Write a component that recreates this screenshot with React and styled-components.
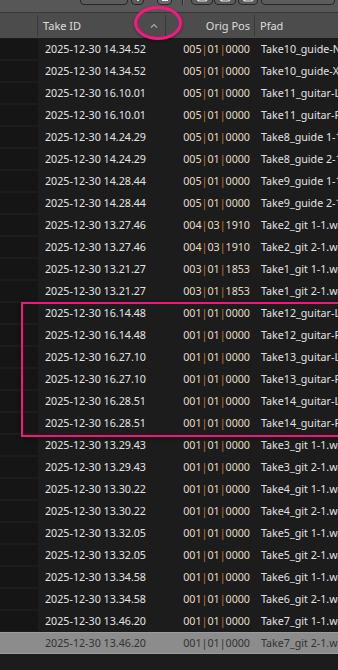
import React from 'react';
import styled, { createGlobalStyle } from 'styled-components';

//////////////////////////////
// Global

const Global = createGlobalStyle`
  html, body {
    margin: 0;
    padding: 0;
    background: #1c1c1c;
  }
  body {
    font-family: "Noto Sans", "Open Sans", sans-serif;
  }
`

//////////////////////////////
// Data

const rows = [
  ['2025-12-30 14.34.52', '005|01|0000', 'Take10_guide-Nylon-1.wav'],
  ['2025-12-30 14.34.52', '005|01|0000', 'Take10_guide-XLR-1.wav'],
  ['2025-12-30 16.10.01', '005|01|0000', 'Take11_guitar-L-1.wav'],
  ['2025-12-30 16.10.01', '005|01|0000', 'Take11_guitar-R-1.wav'],
  ['2025-12-30 14.24.29', '005|01|0000', 'Take8_guide 1-1.wav'],
  ['2025-12-30 14.24.29', '005|01|0000', 'Take8_guide 2-1.wav'],
  ['2025-12-30 14.28.44', '005|01|0000', 'Take9_guide 1-1.wav'],
  ['2025-12-30 14.28.44', '005|01|0000', 'Take9_guide 2-1.wav'],
  ['2025-12-30 13.27.46', '004|03|1910', 'Take2_git 1-1.wav'],
  ['2025-12-30 13.27.46', '004|03|1910', 'Take2_git 2-1.wav'],
  ['2025-12-30 13.21.27', '003|01|1853', 'Take1_git 1-1.wav'],
  ['2025-12-30 13.21.27', '003|01|1853', 'Take1_git 2-1.wav'],
  ['2025-12-30 16.14.48', '001|01|0000', 'Take12_guitar-L-1.wav'],
  ['2025-12-30 16.14.48', '001|01|0000', 'Take12_guitar-R-1.wav'],
  ['2025-12-30 16.27.10', '001|01|0000', 'Take13_guitar-L-1.wav'],
  ['2025-12-30 16.27.10', '001|01|0000', 'Take13_guitar-R-1.wav'],
  ['2025-12-30 16.28.51', '001|01|0000', 'Take14_guitar-L-1.wav'],
  ['2025-12-30 16.28.51', '001|01|0000', 'Take14_guitar-R-1.wav'],
  ['2025-12-30 13.29.43', '001|01|0000', 'Take3_git 1-1.wav'],
  ['2025-12-30 13.29.43', '001|01|0000', 'Take3_git 2-1.wav'],
  ['2025-12-30 13.30.22', '001|01|0000', 'Take4_git 1-1.wav'],
  ['2025-12-30 13.30.22', '001|01|0000', 'Take4_git 2-1.wav'],
  ['2025-12-30 13.32.05', '001|01|0000', 'Take5_git 1-1.wav'],
  ['2025-12-30 13.32.05', '001|01|0000', 'Take5_git 2-1.wav'],
  ['2025-12-30 13.34.58', '001|01|0000', 'Take6_git 1-1.wav'],
  ['2025-12-30 13.34.58', '001|01|0000', 'Take6_git 2-1.wav'],
  ['2025-12-30 13.46.20', '001|01|0000', 'Take7_git 1-1.wav'],
  ['2025-12-30 13.46.20', '001|01|0000', 'Take7_git 2-1.wav'],
]
const SELECTED = rows.length - 1

//////////////////////////////
// Styled components

const Page = styled.div`
  position: relative;
  width: 338px;
  height: 670px;
  overflow: hidden;
  background: #1c1c1c;
  font-size: 10.7px;
`
const Toolbar = styled.div`
  display: flex;
  align-items: flex-end;
  height: 12px;
  padding-bottom: 0;
  overflow: hidden;
  background: #575757;
  border-bottom: 1px solid #383838;
  box-sizing: content-box;
`
const ToolRow = styled.div`
  display: flex;
  align-items: flex-end;
  height: 12px;
  margin-bottom: 7px;
`
const ToolButton = styled.div`
  position: relative;
  flex: none;
  width: ${p => p.w}px;
  height: 22px;
  margin-left: ${p => p.ml}px;
  box-sizing: border-box;
  border: 1px solid #262626;
  border-radius: 4px;
  background: ${p => (p.lit ? '#6a6a6a' : '#5c5c5c')};
  display: flex;
  align-items: flex-end;
  justify-content: center;
  padding-bottom: 1px;
`
const ToolSep = styled.div`
  flex: none;
  width: 1px;
  height: 20px;
  margin-left: ${p => p.ml}px;
  background: #2e2e2e;
  border-right: 1px solid #6a6a6a;
`
const Header = styled.div`
  display: grid;
  grid-template-columns: 38px 128px 89px 1fr;
  height: 25px;
  background: #4c4c4c;
  color: #dcdcdc;
  font-size: 11px;
`
const HeadCell = styled.div`
  display: flex;
  align-items: center;
  justify-content: ${p => (p.right ? 'flex-end' : 'flex-start')};
  padding: ${p => (p.right ? '0 4px 0 0' : '0 0 0 5px')};
  border-right: ${p => (p.last ? 'none' : '1px solid #393939')};
  white-space: nowrap;
  overflow: hidden;
  margin: 2px 0;
  position: relative;
`
const SortArrow = styled.svg`
  position: absolute;
  right: 7px;
  top: 8px;
`
const Body = styled.div`
  display: flex;
  flex-direction: column;
`
const Row = styled.div`
  display: grid;
  grid-template-columns: 38px 128px 89px 1fr;
  height: 22px;
  align-items: center;
  background: ${p => (p.selected ? '#8c8c8c' : '#1c1c1c')};
  color: ${p => (p.selected ? '#333333' : '#e4e4e4')};
  box-sizing: border-box;
  border-top: 1px solid ${p => (p.selected ? '#9c9c9c' : 'transparent')};
  border-bottom: 1px solid ${p => (p.selected ? '#9c9c9c' : 'transparent')};
`
const Gutter = styled.div`
  height: 100%;
  background: ${p => (p.selected ? 'transparent' : '#151515')};
`
const DateCell = styled.div`
  padding-left: 7px;
  white-space: nowrap;
`
const PosCell = styled.div`
  text-align: right;
  padding-right: 5px;
  white-space: nowrap;
  color: ${p => (p.selected ? '#333333' : '#e6dcc4')};
`
const Pipe = styled.span`
  color: ${p => (p.selected ? '#333333' : '#c97a2c')};
`
const PathCell = styled.div`
  padding-left: 6px;
  white-space: nowrap;
  overflow: hidden;
  color: ${p => (p.selected ? '#333333' : '#e2e2e2')};
`
const Ring = styled.div`
  position: absolute;
  left: 134px;
  top: 6px;
  width: 42px;
  height: 28px;
  border: 3.5px solid #ff1484;
  border-radius: 50%;
  box-shadow: 0 1px 3px rgba(0, 0, 0, 0.35);
`
const Frame = styled.div`
  position: absolute;
  left: 21px;
  top: 302px;
  width: 330px;
  height: 131px;
  border: 2px solid #f5167d;
  box-shadow: 0 1px 4px rgba(0, 0, 0, 0.45);
`

//////////////////////////////
// Parts

function Pos({ value, selected }) {
  const parts = value.split('|')
  return (
    <PosCell selected={selected}>
      {parts.map((p, i) => (
        <React.Fragment key={i}>
          {i > 0 && <Pipe selected={selected}>|</Pipe>}
          {p}
        </React.Fragment>
      ))}
    </PosCell>
  )
}

function Glyph({ kind }) {
  if (kind === 'doc') {
    return (
      <svg width="8" height="4" viewBox="0 0 8 4">
        <rect x="1" y="0" width="6" height="2" fill="#f0f0f0" />
      </svg>
    )
  }
  if (kind === 'mark') {
    return (
      <svg width="6" height="4" viewBox="0 0 6 4">
        <rect x="2" y="0" width="2" height="2" fill="#d8d8d8" />
      </svg>
    )
  }
  if (kind === 'loop') {
    return (
      <svg width="14" height="5" viewBox="0 0 14 5">
        <path d="M2 0 Q2 3 5 3 L10 3 Q12 3 12 1" stroke="#e8e8e8" strokeWidth="1.2" fill="none" />
      </svg>
    )
  }
  return null
}

//////////////////////////////
// App

export default function App() {
  return (
    <Page>
      <Global />
      <Toolbar>
        <ToolRow>
          <ToolButton w={48} ml={80} />
          <ToolButton w={13} ml={3}><Glyph kind="mark" /></ToolButton>
          <ToolButton w={15} ml={13} lit><Glyph kind="doc" /></ToolButton>
          <ToolSep ml={10} />
          <ToolButton w={22} ml={7}><Glyph kind="loop" /></ToolButton>
          <ToolButton w={22} ml={1}><Glyph kind="loop" /></ToolButton>
          <ToolButton w={20} ml={2}><Glyph kind="loop" /></ToolButton>
          <ToolButton w={74} ml={3} />
        </ToolRow>
      </Toolbar>
      <Header>
        <HeadCell />
        <HeadCell>
          Take ID
          <SortArrow width="8" height="5" viewBox="0 0 8 5">
            <path d="M1 4.5 L4 1.5 L7 4.5" stroke="#a8a8a8" strokeWidth="1.2" fill="none" />
          </SortArrow>
        </HeadCell>
        <HeadCell right>Orig Pos</HeadCell>
        <HeadCell last>Pfad</HeadCell>
      </Header>
      <Body>
        {rows.map(([date, pos, path], i) => {
          const sel = i === SELECTED
          return (
            <Row key={i} selected={sel}>
              <Gutter selected={sel} />
              <DateCell>{date}</DateCell>
              <Pos value={pos} selected={sel} />
              <PathCell selected={sel}>{path}</PathCell>
            </Row>
          )
        })}
      </Body>
      <Ring />
      <Frame />
    </Page>
  )
}
